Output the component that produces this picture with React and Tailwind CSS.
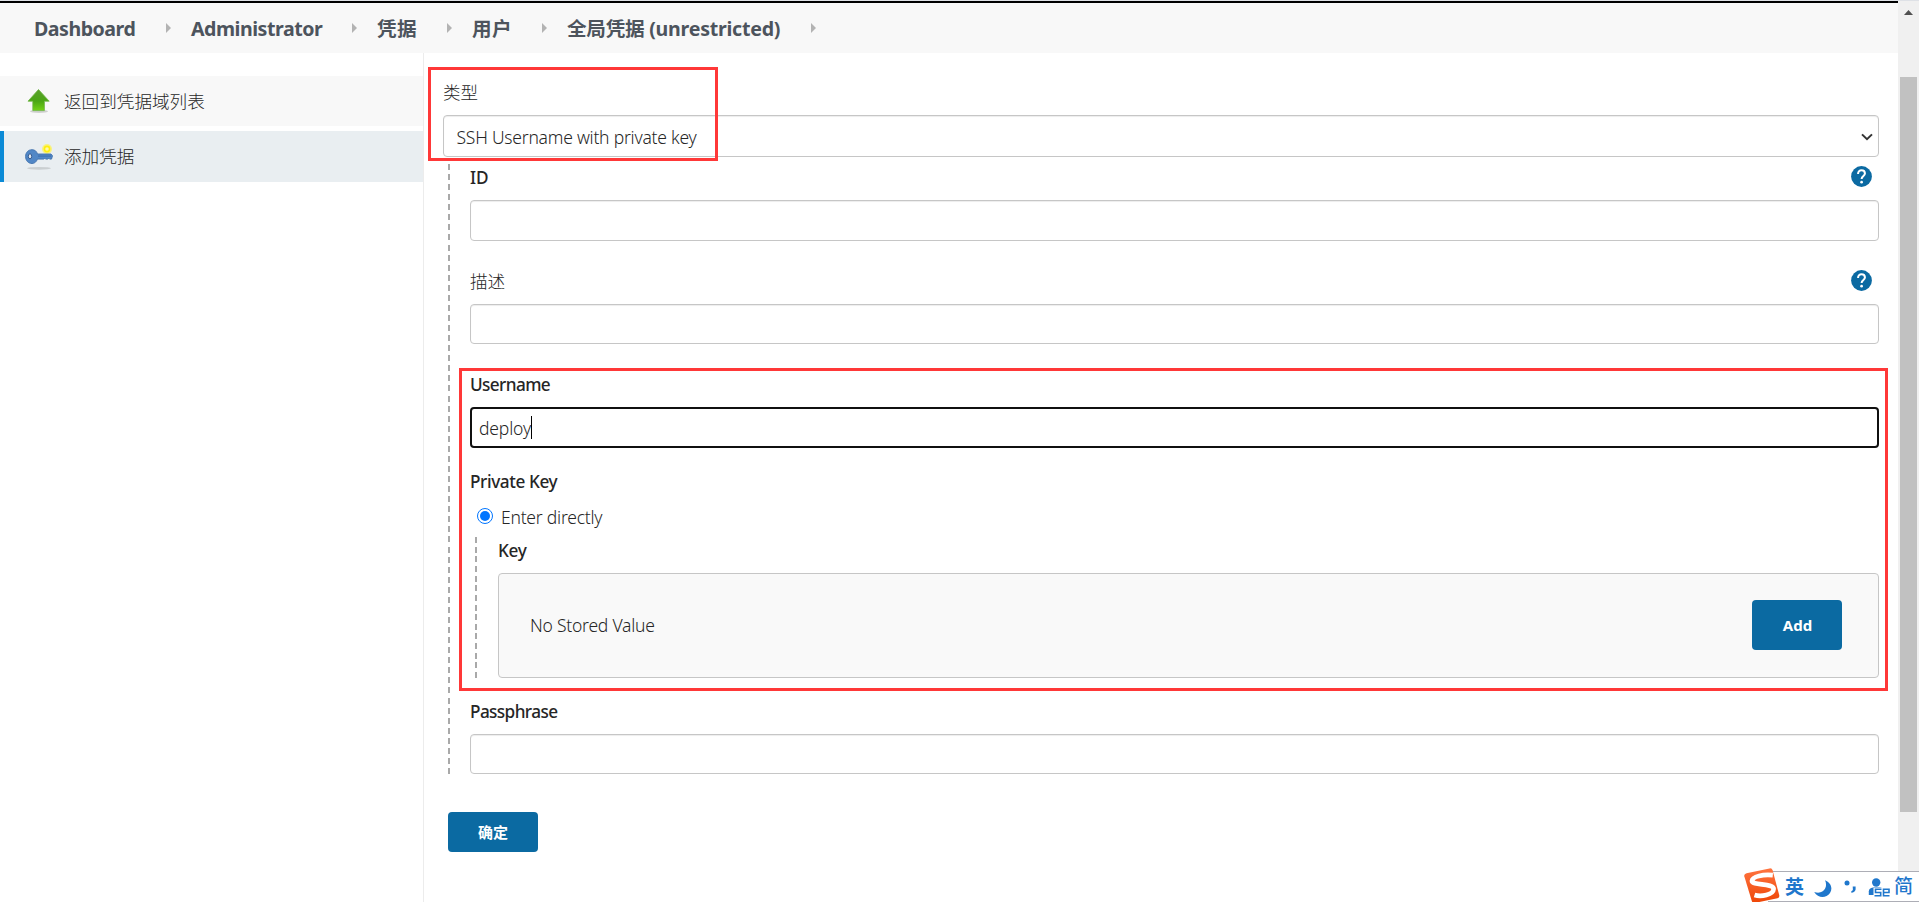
import React from "react";

const crumbs = [
  { text: "Dashboard", cls: "w-[132px] tracking-[-0.5px]" },
  { text: "Administrator", cls: "w-[161px] tracking-[-0.48px]" },
  { text: "凭据", cls: "w-[70px] tracking-[0.3px]" },
  { text: "用户", cls: "w-[70px] tracking-[0.3px]" },
  { text: "全局凭据 (unrestricted)", cls: "w-[244px] tracking-[-0.25px]" },
];

function Breadcrumbs() {
  return (
    <header className="h-[53px] shrink-0 bg-[#f8f8f8]">
      <div className="h-px bg-[#dee1e6]" />
      <div className="h-[2px] bg-black" />
      <nav className="flex h-[50px] items-center pl-[34px]">
        {crumbs.map((c) => (
          <div key={c.text} className="flex items-center">
            <span className={"h-[26px] pt-px text-[19.6px] leading-[26px] font-bold whitespace-nowrap text-[#4d545d] " + c.cls}>
              {c.text}
            </span>
            <svg className="mr-[20px] h-[10px] w-[5px]" viewBox="0 0 5 10">
              <path d="M0 0L5 5L0 10Z" fill="#b3b3b3" />
            </svg>
          </div>
        ))}
      </nav>
    </header>
  );
}

function UpIcon() {
  return (
    <svg className="h-[26px] w-[28px]" viewBox="0 0 28 26">
      <defs>
        <linearGradient id="up" x1="0" y1="0" x2="0" y2="1">
          <stop offset="0" stopColor="#5aa02c" />
          <stop offset="0.55" stopColor="#4ba614" />
          <stop offset="1" stopColor="#73d216" />
        </linearGradient>
      </defs>
      <ellipse cx="14" cy="23.4" rx="9" ry="1.6" fill="#000" opacity="0.16" />
      <path d="M13.5 1.5L24.2 13.2H19.4V22.6H7.8V13.2H3Z" fill="url(#up)" stroke="#6fb544" strokeWidth="0.8" strokeLinejoin="round" />
    </svg>
  );
}

function KeyIcon() {
  return (
    <svg className="h-[28px] w-[28px]" viewBox="0 0 28 28">
      <ellipse cx="14" cy="25.3" rx="12" ry="1.4" fill="#000" opacity="0.13" />
      <circle cx="22" cy="6" r="5" fill="#fff34a" opacity="0.65" />
      <circle cx="22" cy="6" r="3.4" fill="#ffee12" />
      <circle cx="22" cy="6" r="1.8" fill="#fff9a8" />
      <path d="M12.5 11H26L27.5 12.8L26.5 16.1H24.6L23.8 15.3L22.8 16.1H20.6L19.8 15.3L18.8 16.1H12.5C11.3 18.9 9.6 20.5 7 20.5C3.2 20.5 0.6 17.5 0.6 13.5C0.6 9.5 3.2 6.7 7 6.7C9.7 6.7 11.6 8.1 12.5 11Z" fill="#5187c6" stroke="#3f70ad" strokeWidth="0.9" />
      <path d="M13 13.1H26" stroke="#3a69a8" strokeWidth="0.9" />
      <ellipse cx="5" cy="13.3" rx="1.7" ry="2.5" fill="#dfe7ee" stroke="#2c528a" strokeWidth="0.9" />
    </svg>
  );
}

function Sidebar() {
  return (
    <aside className="w-[424px] shrink-0 border-r border-[#ececec] pt-[23px] text-[17.6px]">
      <div className="flex h-[50px] items-center bg-[#f8f8f8] pl-[25px]">
        <UpIcon />
        <span className="ml-[11px] leading-[24px]">返回到凭据域列表</span>
      </div>
      <div className="mt-[5px] flex h-[51px] items-center border-l-4 border-[#0b8ad6] bg-[#e9eef1] pl-[21px]">
        <KeyIcon />
        <span className="ml-[11px] pb-[2px] leading-[24px]">添加凭据</span>
      </div>
    </aside>
  );
}

function Help() {
  return (
    <svg className="mr-[7px] h-[21px] w-[21px]" viewBox="0 0 22 22">
      <circle cx="11" cy="11" r="10.9" fill="#0b6aa2" />
      <path d="M7.4 8.3C7.4 6 9 4.5 11 4.5C13.1 4.5 14.6 5.9 14.6 7.9C14.6 10.4 11.1 10.5 11.1 13.6" fill="none" stroke="#fff" strokeWidth="2.1" />
      <circle cx="11.1" cy="16.9" r="1.4" fill="#fff" />
    </svg>
  );
}

function Label({ children, className, help }) {
  return (
    <div className={"flex items-start justify-between " + className}>
      <span className="h-[24px] text-[17.2px] leading-[24px] font-medium tracking-[-0.6px]">{children}</span>
      {help && <Help />}
    </div>
  );
}

function Field({ className }) {
  return <div className={"rounded-[4px] border border-[#c6c6c6] bg-white shadow-[inset_0_1px_1px_rgba(0,0,0,0.075)] " + className} />;
}

function Form() {
  return (
    <main className="min-w-0 flex-1 pt-[27px] pr-[19px] pl-[19px] text-[17.5px] tracking-[-0.23px]">
      <div className="h-[35px] leading-[24px] tracking-normal">类型</div>
      <div className="flex h-[42px] items-center justify-between rounded-[4px] border border-[#c6c6c6] pr-[5px] pl-[12.5px] shadow-[inset_0_1px_1px_rgba(0,0,0,0.075)]">
        <span className="pt-[2px] leading-[24px]">SSH Username with private key</span>
        <svg className="mt-[2px] h-[8px] w-[12px]" viewBox="0 0 12 8">
          <path d="M1 1.4L6 6.2L11 1.4" fill="none" stroke="#333" strokeWidth="2" />
        </svg>
      </div>

      <div className="mt-[7px] ml-[5px] flex h-[610px]">
        <div className="w-[2px] shrink-0 bg-[repeating-linear-gradient(to_bottom,#a9a9a9_0_6px,transparent_6px_10.067px)]" />
        <div className="ml-[20px] min-w-0 flex-1">
          <Label className="h-[36px] pt-[2px]" help><span className="tracking-normal">ID</span></Label>
          <Field className="h-[41px]" />
          <Label className="h-[63px] pt-[29px]" help><span className="block -translate-y-px text-[17.6px] font-light tracking-normal">描述</span></Label>
          <Field className="h-[40px]" />
          <Label className="h-[63px] pt-[29px]">Username</Label>
          <div className="flex h-[41px] items-center rounded-[4px] border-2 border-[#101010] pl-[7px]">
            <span className="leading-[24px] tracking-[-0.15px]">deploy</span>
            <span className="h-[23px] w-px bg-black" />
          </div>
          <Label className="h-[57px] pt-[22px]"><span className="tracking-[-0.4px]">Private Key</span></Label>
          <div className="flex h-[24px] items-center pl-[7px]">
            <span className="mb-[2px] flex size-[16px] items-center justify-center rounded-full border border-[#0075ff] bg-white">
              <span className="size-[10px] rounded-full bg-[#0075ff]" />
            </span>
            <span className="ml-[8px] leading-[24px]">Enter directly</span>
          </div>
          <div className="mt-[8px] ml-[5px] flex h-[141px]">
            <div className="w-[2px] shrink-0 bg-[repeating-linear-gradient(to_bottom,#a9a9a9_0_6px,transparent_6px_9.643px)]" />
            <div className="ml-[21px] flex min-w-0 flex-1 flex-col">
              <Label className="h-[36px] pt-[2px]"><span className="tracking-[-0.3px]">Key</span></Label>
              <div className="flex h-[105px] items-center justify-between rounded-[4px] border border-[#c6c6c6] bg-[#f9f9f9] pr-[36px] pb-[2px] pl-[31px]">
                <span className="leading-[24px]">No Stored Value</span>
                <button className="h-[50px] w-[90px] rounded-[4px] bg-[#0b6aa2] pt-px pl-px text-[15px] font-bold tracking-normal text-white">Add</button>
              </div>
            </div>
          </div>
          <Label className="h-[56px] pt-[22px]">Passphrase</Label>
          <Field className="h-[40px]" />
        </div>
      </div>

      <button className="mt-[38px] ml-[5px] block h-[40px] w-[90px] rounded-[4px] bg-[#0b6aa2] text-[15px] font-bold tracking-normal text-white">确定</button>
    </main>
  );
}

function Scrollbar() {
  return (
    <div className="w-[21px] shrink-0 border-t border-[#dee1e6] bg-[#f0f0f0]">
      <div className="flex h-[76px] pt-[9px] pl-[6px]">
        <svg className="h-[5px] w-[9px]" viewBox="0 0 9 5">
          <path d="M4.5 0L9 5H0Z" fill="#505050" />
        </svg>
      </div>
      <div className="ml-[2px] h-[735px] w-[17px] bg-[#c1c1c1]" />
    </div>
  );
}

function InputMethodBar() {
  return (
    <div className="absolute right-0 bottom-0 h-[31px] w-[151px] border-t border-b border-[#adaeb6] bg-white text-[#1f77cc]">
      <svg className="absolute top-[-4px] left-[-25px] h-[35px] w-[38px]" viewBox="0 0 38 35">
        <defs>
          <linearGradient id="sg" x1="0" y1="0" x2="0" y2="1">
            <stop offset="0" stopColor="#ff7440" />
            <stop offset="1" stopColor="#ee4607" />
          </linearGradient>
        </defs>
        <path d="M3.5 5.3L26.5 0.4Q29 0 29.6 2.2L36.2 27Q36.8 29.5 34.5 30.2L12 34.9Q9.5 35.3 8.8 33L1.3 8.3Q0.8 6 3.5 5.3Z" fill="url(#sg)" />
        <path d="M29.8 7.2C20 6.3 9.6 8.3 9 12.7C8.5 17.7 30.8 15 30.6 21C30.3 26.9 18 29.1 11.5 27" fill="none" stroke="#fff" strokeWidth="4.7" />
      </svg>
      <div className="flex h-full items-center">
        <span className="ml-[17px] text-[19px] leading-[24px] font-bold">英</span>
        <svg className="mt-[4px] ml-[10px] h-[18px] w-[18px]" viewBox="0 0 18 18">
          <path d="M11 0.3C17 2.5 19 8.5 16 13C12.3 18.2 4.3 18.7 0.2 12C5.5 13.6 9.3 12 11 8.8C12.6 5.8 12.2 2.8 11 0.3Z" fill="#1f77cc" />
        </svg>
        <svg className="ml-[12px] h-[15px] w-[12px]" viewBox="0 0 12 15">
          <circle cx="3" cy="4" r="2.5" fill="#1f77cc" />
          <path d="M8.7 7.4H11.6V10.5Q11 13.6 7.3 13.8V12.2Q8.9 11.7 8.9 10.4Z" fill="#1f77cc" />
        </svg>
        <svg className="mt-[1px] ml-[12px] h-[19px] w-[22px]" viewBox="0 0 22 19">
          <circle cx="8.2" cy="4.5" r="4.2" fill="#1f77cc" />
          <path d="M0.8 17V13.2Q1 9.8 5 9.4H12Q15 9.8 15 12V17Z" fill="#1f77cc" />
          <path d="M5.5 10H22V19H5.5Z" fill="#fff" />
          <path d="M13.5 11.3H7.5V14.5H12.7V17.8H6.5M21.5 17.8H15.5V11.3H21V14.5H15.5" fill="none" stroke="#1f77cc" strokeWidth="1.6" />
        </svg>
        <span className="ml-[4px] pb-px text-[19px] leading-[24px] font-medium">简</span>
      </div>
    </div>
  );
}

export default function App() {
  return (
    <div className="relative flex h-[902px] w-[1919px] overflow-hidden bg-white font-['Noto_Sans','Noto_Sans_CJK_SC',sans-serif] font-light text-[#262626]">
      <div className="flex min-w-0 flex-1 flex-col">
        <Breadcrumbs />
        <div className="flex flex-1">
          <Sidebar />
          <Form />
        </div>
      </div>
      <Scrollbar />
      <div className="pointer-events-none absolute top-[67px] left-[428px] h-[94px] w-[290px] border-3 border-[#ff3838]" />
      <div className="pointer-events-none absolute top-[368px] left-[459px] h-[323px] w-[1429px] border-3 border-[#ff3838]" />
      <InputMethodBar />
    </div>
  );
}
